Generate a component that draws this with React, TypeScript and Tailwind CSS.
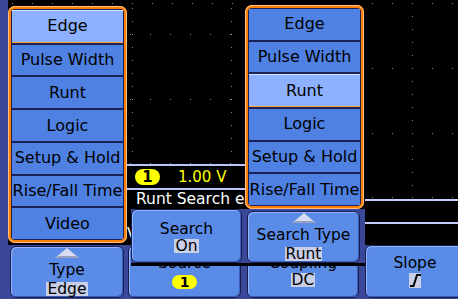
import React from "react";

const FONT = "font-['DejaVu_Sans',sans-serif]";

function Graticule() {
  const dots: [number, number][] = [];
  for (let x = 132; x <= 232; x += 20) dots.push([x, 3]);
  for (const y of [34, 99, 163]) for (let x = 130; x <= 230; x += 20) dots.push([x, y]);
  for (const x of [132, 231]) for (let y = 8; y < 165; y += 13) dots.push([x, y]);
  for (const y of [3, 68, 133, 197]) for (let x = 372; x <= 452; x += 20) dots.push([x, y]);
  for (let y = 16; y < 197; y += 13) dots.push([412, y]);
  for (let x = 12; x <= 112; x += 20) dots.push([x, 3]);
  return (
    <svg width="450" height="245" viewBox="8 0 450 245" className="block">
      {dots.map(([x, y], i) => (
        <rect key={i} x={x} y={y} width="1" height="1" fill="#8a8a78" />
      ))}
      <rect x="365" y="199" width="93" height="2" fill="#c4ceff" />
      <rect x="365" y="222" width="93" height="2" fill="#c4ceff" />
    </svg>
  );
}

function Menu({
  items,
  active,
  className,
}: {
  items: string[];
  active: number;
  className: string;
}) {
  return (
    <div
      className={`absolute rounded-[7px] bg-[#ff7f00] p-[3px] shadow-[inset_0_0_0_1px_#ffbf80] ${className}`}
    >
      <div className="flex h-full flex-col gap-[2px] overflow-hidden rounded-[4px] bg-[#1b2257] p-[1px]">
        {items.map((it, i) => (
          <div
            key={it}
            className={`flex flex-1 items-center justify-center overflow-hidden whitespace-nowrap text-[16px] leading-none text-black ${
              i === active
                ? "border-b border-t border-b-[#ffa030] border-t-[#d8e2ff] bg-[#8db1ff]"
                : "bg-[#4f81e3]"
            }`}
          >
            {it}
          </div>
        ))}
      </div>
    </div>
  );
}

function Tri() {
  return (
    <svg width="24" height="10" viewBox="0 0 24 10" className="block shrink-0">
      <polygon points="12,0 24,10 0,10" fill="#d6dbef" />
      <polygon points="3,8 21,8 24,10 0,10" fill="#9aa0bc" />
    </svg>
  );
}

function Btn({
  label,
  children,
  tri,
  className,
}: {
  label: string;
  children?: React.ReactNode;
  tri?: boolean;
  className: string;
}) {
  return (
    <div
      className={`flex shrink-0 flex-col items-center overflow-hidden rounded-[6px] border border-[#161c4e] bg-[#5a8be6] shadow-[inset_1px_1px_0_#93b3ff,inset_-1px_-1px_0_#3d5fba] ${className}`}
    >
      {tri && <Tri />}
      <div className={`whitespace-nowrap text-[15.5px] leading-[16px] text-black ${tri ? "mt-[4px]" : ""}`}>
        {label}
      </div>
      {children}
    </div>
  );
}

function Val({ children, mt = "mt-[2px]" }: { children: React.ReactNode; mt?: string }) {
  return (
    <span className={`block bg-[#c8cfe6] px-[1px] text-[15.5px] leading-[14px] text-black ${mt}`}>
      {children}
    </span>
  );
}

function Badge({ h, t }: { h: string; t: string }) {
  return (
    <span
      className={`flex w-[25px] shrink-0 items-center justify-center rounded-full bg-[#ffff00] font-bold leading-none text-black ${h} ${t}`}
    >
      1
    </span>
  );
}

export default function App() {
  return (
    <div className={`relative flex h-[299px] w-[458px] flex-col overflow-hidden bg-[#3b4899] ${FONT}`}>
      {/* screen */}
      <div className="flex h-[245px] shrink-0">
        <div className="w-[8px] shrink-0 bg-[#3b4899]" />
        <div className="flex-1 bg-black">
          <Graticule />
        </div>
      </div>

      {/* bottom button row */}
      <div className="flex h-[54px] items-start pl-[10px]">
        <Btn label="Type" tri className="mt-[1px] h-[52px] w-[114px] pt-[1px]">
          <Val mt="mt-[4px]">Edge</Val>
        </Btn>
        <Btn label="Source" className="ml-[4px] h-[53px] w-[113px] pt-[9px]">
          <div className="mt-[4px] flex">
            <Badge h="h-[14px]" t="text-[14px]" />
          </div>
        </Btn>
        <Btn label="Coupling" className="ml-[6px] h-[53px] w-[112px] pt-[9px]">
          <Val>DC</Val>
        </Btn>
        <Btn label="Slope" className="ml-[6px] h-[53px] w-[100px] pt-[9px]">
          <span className="mt-[2px] flex h-[15px] w-[12px] items-center justify-center bg-[#c8cfe6]">
            <svg width="12" height="15" viewBox="0 0 12 15" className="block">
              <path d="M1 13 H4.5 L8 2 H12" fill="none" stroke="#000" strokeWidth="2" />
            </svg>
          </span>
        </Btn>
      </div>

      {/* readout panel */}
      <div className="absolute left-[127px] top-[164px] flex w-[118px] flex-col">
        <div className="h-[2px] bg-[#b8c6f8]" />
        <div className="flex h-[22px] items-center bg-black pl-[8px]">
          <Badge h="h-[16px]" t="text-[15px]" />
          <span className="ml-[18px] text-[15px] leading-none text-[#ffff00]">1.00 V</span>
        </div>
        <div className="h-[2px] bg-[#b8c6f8]" />
        <div className="flex h-[19px] items-center overflow-hidden whitespace-nowrap bg-black pl-[9px] text-[15.5px] leading-none text-white">
          Runt Search e
        </div>
      </div>

      {/* fragment behind */}
      <div className="absolute left-[127px] top-[226px] h-[16px] w-[4px] overflow-hidden text-[15px] leading-[16px] text-white">
        V
      </div>

      {/* overlay buttons */}
      <div className="absolute left-[131px] top-[209px] flex h-[57px] w-[234px] items-start border-b-[3px] border-black bg-[#3b4899]">
        <Btn label="Search" className="h-[54px] w-[111px] pt-[11px]">
          <Val>On</Val>
        </Btn>
        <Btn label="Search Type" tri className="ml-[5px] mt-[2px] h-[52px] w-[113px] pt-[1px]">
          <Val mt="mt-[4px]">Runt</Val>
        </Btn>
      </div>

      {/* menus */}
      <Menu
        className="left-[8px] top-[6px] h-[237px] w-[119px]"
        active={0}
        items={["Edge", "Pulse Width", "Runt", "Logic", "Setup & Hold", "Rise/Fall Time", "Video"]}
      />
      <Menu
        className="left-[245px] top-[5px] h-[204px] w-[119px]"
        active={2}
        items={["Edge", "Pulse Width", "Runt", "Logic", "Setup & Hold", "Rise/Fall Time"]}
      />
    </div>
  );
}
